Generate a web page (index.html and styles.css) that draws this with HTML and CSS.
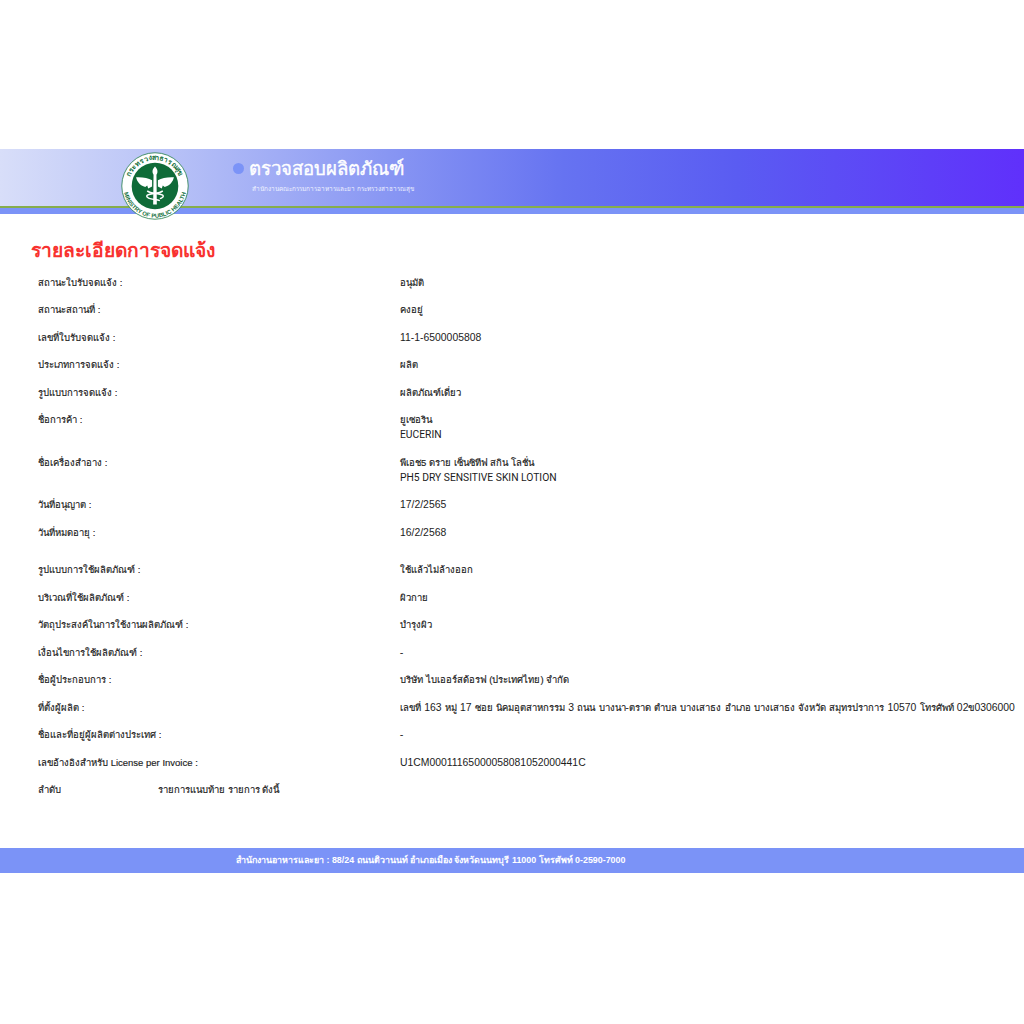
FILE: index.html
```html
<!DOCTYPE html>
<html lang="th">
<head>
  <meta charset="UTF-8" />
  <title>ตรวจสอบผลิตภัณฑ์</title>
  <link rel="stylesheet" href="styles.css">
</head>
<body>

  <!-- banner -->
  <header class="banner">
    <div class="banner-main">
      <svg class="logo" viewBox="0 0 70 70" width="70" height="70">
        <defs>
          <path id="arcTop" d="M8 35a27 27 0 0 1 54 0" />
          <path id="arcBottom" d="M2.500 35a32.500 32.500 0 0 0 65 0" />
        </defs>
        <circle cx="35" cy="35" r="34.200" fill="#fff" stroke="#1c7a45" stroke-width="0.800" />
        <circle cx="35" cy="35" r="24" fill="#0f6b38" />
        <text class="logo-top"><textPath href="#arcTop" startOffset="50%" text-anchor="middle">กระทรวงสาธารณสุข</textPath></text>
        <text class="logo-bottom"><textPath href="#arcBottom" startOffset="50%" text-anchor="middle">MINISTRY OF PUBLIC HEALTH</textPath></text>
        <g fill="#fff">
          <path d="M35 15c2 2 3 4 2.400 6.500l-.9 1.800.4 30.700h-3.800l.4-30.700-.9-1.800C32 19 33 17 35 15z" />
          <path d="M32 29C28 27 22 25.500 15.500 26c1 4.500 4 8.500 9.500 10l2-1.500 1 3 4-2z" />
          <path d="M38 29c4-2 10-3.500 16.500-3 -1 4.500-4 8.500-9.500 10l-2-1.500-1 3-4-2z" />
        </g>
        <path d="M27 40c4 3.500 12 2 16 4.500 1.500 1.500-1 3-3 3.500M43 40c-4 3.500-12 2-16 4.500-1.500 1.500 1 3 3 3.500M30 48c4 1 7 1 10 2" fill="none" stroke="#fff" stroke-width="1.500" />
      </svg>
      <span class="banner-dot"></span>
      <div class="banner-text">
        <div class="banner-title">ตรวจสอบผลิตภัณฑ์</div>
        <div class="banner-sub">สำนักงานคณะกรรมการอาหารและยา กระทรวงสาธารณสุข</div>
      </div>
    </div>
    <div class="banner-stripe"></div>
  </header>

  <!-- detail -->
  <main class="detail">
    <h1>รายละเอียดการจดแจ้ง</h1>

    <div class="rows">
      <div class="row"><div>สถานะใบรับจดแจ้ง :</div><div>อนุมัติ</div></div>
      <div class="row"><div>สถานะสถานที่ :</div><div>คงอยู่</div></div>
      <div class="row"><div>เลขที่ใบรับจดแจ้ง :</div><div class="num">11-1-6500005808</div></div>
      <div class="row"><div>ประเภทการจดแจ้ง :</div><div>ผลิต</div></div>
      <div class="row"><div>รูปแบบการจดแจ้ง :</div><div>ผลิตภัณฑ์เดี่ยว</div></div>
      <div class="row"><div>ชื่อการค้า :</div><div>ยูเซอริน<br><span class="latin">EUCERIN</span></div></div>
      <div class="row"><div>ชื่อเครื่องสำอาง :</div><div>พีเอช5 ดราย เซ็นซิทีฟ สกิน โลชั่น<br><span class="latin">PH5 DRY SENSITIVE SKIN LOTION</span></div></div>
      <div class="row"><div>วันที่อนุญาต :</div><div class="num">17/2/2565</div></div>
      <div class="row"><div>วันที่หมดอายุ :</div><div class="num">16/2/2568</div></div>
    </div>

    <div class="rows rows-second">
      <div class="row"><div>รูปแบบการใช้ผลิตภัณฑ์ :</div><div>ใช้แล้วไม่ล้างออก</div></div>
      <div class="row"><div>บริเวณที่ใช้ผลิตภัณฑ์ :</div><div>ผิวกาย</div></div>
      <div class="row"><div>วัตถุประสงค์ในการใช้งานผลิตภัณฑ์ :</div><div>บำรุงผิว</div></div>
      <div class="row"><div>เงื่อนไขการใช้ผลิตภัณฑ์ :</div><div>-</div></div>
      <div class="row"><div>ชื่อผู้ประกอบการ :</div><div>บริษัท ไบเออร์สด้อรฟ (ประเทศไทย) จำกัด</div></div>
      <div class="row"><div>ที่ตั้งผู้ผลิต :</div><div class="address">เลขที่ <span class="num">163</span> หมู่ <span class="num">17</span> ซอย นิคมอุตสาหกรรม <span class="num">3</span> ถนน บางนา-ตราด ตำบล บางเสาธง อำเภอ บางเสาธง จังหวัด สมุทรปราการ <span class="num">10570</span> โทรศัพท์ <span class="num">02</span>ข<span class="num">0306000</span></div></div>
      <div class="row"><div>ชื่อและที่อยู่ผู้ผลิตต่างประเทศ :</div><div>-</div></div>
      <div class="row"><div>เลขอ้างอิงสำหรับ License per Invoice :</div><div class="num">U1CM00011165000058081052000441C</div></div>
      <div class="row row-list"><div>ลำดับ</div><div>รายการแนบท้าย รายการ ดังนี้</div></div>
    </div>
  </main>

  <footer class="footer">สำนักงานอาหารและยา : 88/24 ถนนติวานนท์ อำเภอเมือง จังหวัดนนทบุรี 11000 โทรศัพท์ 0-2590-7000</footer>

</body>
</html>
```

FILE: styles.css
```css
body {
  margin: 0;
  padding-top: 149px;
  background: #fff;
  font-family: "Liberation Sans", "Noto Sans", sans-serif;
  font-size: 9.500px;
  line-height: 15px;
  color: #1c1c1c;
}

.banner-main {
  display: flex;
  align-items: flex-start;
  height: 57px;
  padding-left: 121px;
  background: linear-gradient(90deg, #d8def9 0%, #b9c3f7 16%, #8896f3 38%, #6673f1 55%, #5a5cf2 72%, #6030fb 100%);
  border-bottom: 2px solid #86ad4c;
}

.banner-stripe {
  height: 6px;
  background: #7b93f7;
}

.logo {
  flex: none;
  margin-top: 3px;
  position: relative;
  z-index: 1;
  height: 68px;
  width: 68px;
}

.logo-top {
  font-size: 7.200px;
  font-weight: bold;
  fill: #14703c;
}

.logo-bottom {
  font-size: 6px;
  font-weight: bold;
  fill: #14703c;
}

.banner-dot {
  flex: none;
  width: 11px;
  height: 11px;
  margin: 14px 5px 0 44px;
  border-radius: 50%;
  background: #7b93f7;
}

.banner-title {
  margin-top: 6px;
  font-size: 18.600px;
  line-height: 28px;
  color: #fff;
  -webkit-text-stroke: 0.4px #fff;
}

.banner-sub {
  margin: 1px 0 0 3px;
  font-size: 6.400px;
  line-height: 10px;
  color: #eef1ff;
}

.detail {
  padding: 24px 0 0 31px;
}

h1 {
  margin: 0 0 8.500px;
  font-size: 19.200px;
  line-height: 26px;
  font-weight: bold;
  color: #f8322f;
}

.rows {
  padding-left: 7px;
}

.rows-second {
  margin-top: 10px;
}

.row {
  display: grid;
  grid-template-columns: 362px 1fr;
  padding: 2px 0 10.500px;
  white-space: nowrap;
  -webkit-text-stroke: 0.15px #1c1c1c;
}

.row-list {
  grid-template-columns: 120px 1fr;
}

.num {
  font-size: 10.400px;
  -webkit-text-stroke: 0;
}

.latin {
  font-family: Roboto, sans-serif;
  font-size: 10.300px;
  -webkit-text-stroke: 0;
}

.address {
  word-spacing: 0.6px;
}

.footer {
  height: 25px;
  margin-top: 40px;
  padding-left: 236px;
  background: #7b93f7;
  font-size: 8.900px;
  line-height: 25px;
  font-weight: bold;
  color: #fff;
}
```
